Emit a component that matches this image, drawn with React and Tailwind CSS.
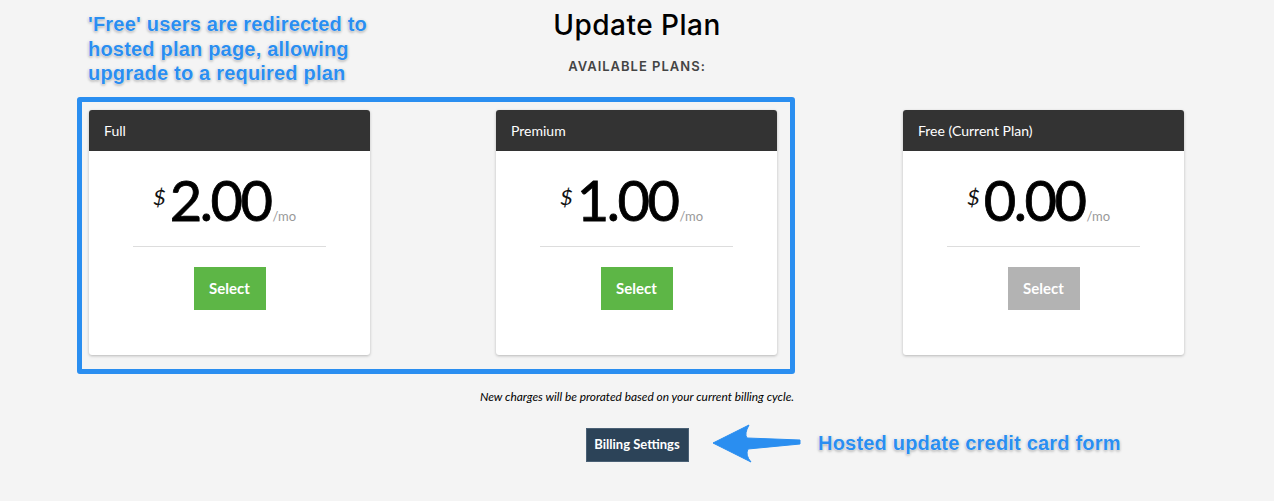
const plans = [
  { name: "Full", price: "2.00", active: true },
  { name: "Premium", price: "1.00", active: true },
  { name: "Free (Current Plan)", price: "0.00", active: false },
];

const note =
  "text-[#2a8ef0] font-bold text-[20px] leading-[24.5px] tracking-[0.2px] [font-family:'Liberation_Sans',Arial,sans-serif] [text-shadow:0_0_1px_#fff,0_0_2px_#fff,0_1px_3px_rgba(0,0,0,0.45)]";

const PlanCard = ({ plan }) => {
  return (
    <div className="w-[281px] bg-white rounded-[3px] shadow-[0_1px_3px_rgba(0,0,0,0.25)] overflow-hidden">
      {/* Header */}
      <div className="h-[41px] bg-[#333333] text-white text-[14px] flex items-center px-[15px]">
        {plan.name}
      </div>

      {/* Body */}
      <div className="flex flex-col items-center pt-[21px] pb-[45px]">
        <div className="flex items-baseline justify-center h-[56px] pr-[10px]">
          <span className="text-[22px] leading-none relative -top-[16px] mr-[4px] italic text-[#111]">$</span>
          <span className="text-[56px] leading-[56px] text-black tracking-[-2.5px] [-webkit-text-stroke:0.8px_black]">
            {plan.price}
          </span>
          <span className="text-[13px] text-[#999] ml-[2px]">/mo</span>
        </div>
        <div className="w-[193px] h-px bg-[#dddddd] mt-[18px]" />
        <button
          className={`mt-[20px] w-[72px] h-[43px] text-white font-bold text-[15px] ${
            plan.active ? "bg-[#5db646]" : "bg-[#b3b3b3]"
          }`}
        >
          Select
        </button>
      </div>
    </div>
  );
};

const App = () => {
  return (
    <div className="relative w-[1274px] h-[501px] bg-[#f4f4f4] overflow-hidden [font-family:Lato,'Open_Sans',sans-serif]">
      <div className="flex flex-col items-center pt-[8px]">
        <h1 className="text-[28px] leading-[34px] font-medium text-black tracking-[0.5px] [font-family:Inter,sans-serif]">
          Update Plan
        </h1>
        <div className="mt-[14px] text-[13px] leading-[20px] font-semibold text-[#444] tracking-[1px] [font-family:Inter,sans-serif]">
          AVAILABLE PLANS:
        </div>

        {/* Plans */}
        <div className="mt-[34px] -ml-[1px] flex gap-[126px]">
          {plans.map((p) => (
            <PlanCard key={p.name} plan={p} />
          ))}
        </div>

        <p className="mt-[34px] text-[11.9px] leading-[16px] italic text-black">
          New charges will be prorated based on your current billing cycle.
        </p>

        <button className="mt-[23px] w-[103px] h-[34px] bg-[#2c4358] border border-[#4a6075] text-white font-bold text-[13px]">
          Billing Settings
        </button>
      </div>

      {/* Annotations */}
      <div className="absolute left-[77px] top-[97px] w-[718px] h-[277px] border-[5px] border-[#2a8ef0] rounded-[3px] pointer-events-none" />

      <div className={`absolute left-[88px] top-[12px] ${note}`}>
        'Free' users are redirected to
        <br />
        hosted plan page, allowing
        <br />
        upgrade to a required plan
      </div>

      <svg className="absolute left-[705px] top-[418px]" width="105" height="52" viewBox="705 418 105 52">
        <path
          d="M713 443 L749 425 Q744 434 747 438 L800 440 L800 444 L748 449 Q745 455 751 462 Z"
          fill="#2a8ef0"
          stroke="#2a8ef0"
          strokeWidth="1"
          strokeLinejoin="round"
        />
      </svg>

      <div className={`absolute left-[818px] top-[431px] ${note}`}>Hosted update credit card form</div>
    </div>
  );
};

export default App;
